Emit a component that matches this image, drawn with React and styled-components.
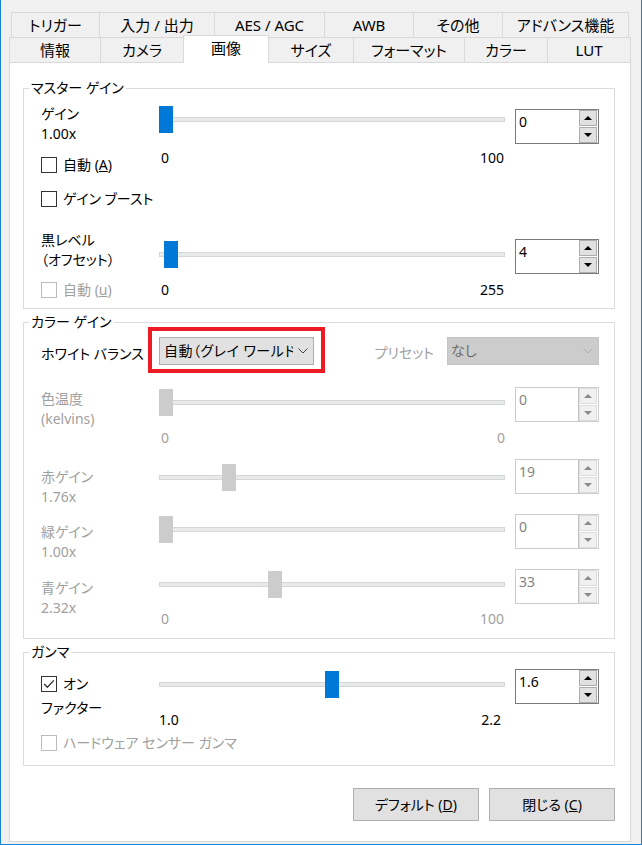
import React from 'react';
import styled, { createGlobalStyle } from 'styled-components';

const GRAY = '#a0a0a0';

const GlobalStyle = createGlobalStyle`
  html, body { margin: 0; padding: 0; background: #f0f0f0; }
  body {
    font-family: "Noto Sans", "Noto Sans CJK JP", sans-serif;
    font-size: 14px;
    color: #000;
    font-feature-settings: "palt" 1;
  }
`;

const Window = styled.div`
  width: 642px;
  height: 845px;
  box-sizing: border-box;
  border: 1px solid #1883d7;
  border-top: none;
  padding: 12px 10px 2px 8px;
  background: #f0f0f0;
`;

const TabRow = styled.div`
  display: flex;
  align-items: flex-end;
  height: 25px;
  margin-left: ${(p) => p.$indent || 0}px;
  position: relative;
`;

const Tab = styled.div`
  box-sizing: border-box;
  flex: none;
  width: ${(p) => p.$w}px;
  height: ${(p) => (p.$active ? 28 : 25)}px;
  margin-right: -1px;
  margin-bottom: ${(p) => (p.$active ? -1 : 0)}px;
  border: 1px solid #d9d9d9;
  border-bottom: none;
  background: ${(p) => (p.$active ? '#ffffff' : '#f0f0f0')};
  position: relative;
  z-index: ${(p) => (p.$active ? 2 : 1)};
  text-align: center;
  font-size: 15px;
  line-height: 24px;
  white-space: nowrap;
`;

const Panel = styled.div`
  box-sizing: border-box;
  width: 622px;
  height: 780px;
  background: #ffffff;
  border: 1px solid #d9d9d9;
  padding: 15px 15px 0 13px;
`;

const Group = styled.fieldset`
  margin: ${(p) => p.$mt || 0}px 0 0;
  padding: 0;
  border: 1px solid #dcdcdc;
  min-width: 0;
`;

const Legend = styled.legend`
  margin-left: 5px;
  padding: 0 2px;
  line-height: 20px;
  font-size: 14px;
  color: #000;
`;

const GroupBody = styled.div`
  padding: 0 0 ${(p) => p.$pb}px 17px;
`;

const SliderRow = styled.div`
  display: grid;
  grid-template-columns: 118px 356px 84px;
  align-items: start;
  margin-top: ${(p) => p.$mt || 0}px;
`;

const ComboRow = styled.div`
  display: grid;
  grid-template-columns: 118px 155px 1fr 152px;
  align-items: start;
  margin-top: ${(p) => p.$mt || 0}px;
  width: 558px;
`;

const Col = styled.div`
  display: flex;
  flex-direction: column;
  align-items: flex-start;
  padding-top: ${(p) => p.$pt || 0}px;
`;

const Text = styled.div`
  line-height: 20px;
  white-space: nowrap;
  color: ${(p) => (p.$dim ? GRAY : '#000')};
  margin-top: ${(p) => p.$mt || 0}px;
  padding-top: ${(p) => p.$pt || 0}px;
  padding-right: ${(p) => p.$pr || 0}px;
  justify-self: ${(p) => (p.$end ? 'end' : 'start')};
`;

const CheckLabel = styled.label`
  display: flex;
  align-items: center;
  gap: 6px;
  height: 20px;
  line-height: 20px;
  white-space: nowrap;
  margin-top: ${(p) => p.$mt || 0}px;
  color: ${(p) => (p.$dim ? GRAY : '#000')};
`;

const Box = styled.span`
  flex: none;
  width: 16px;
  height: 16px;
  box-sizing: border-box;
  border: 1px solid ${(p) => (p.$dim ? '#bcbcbc' : '#333333')};
  background: #fff;
  display: flex;
  align-items: center;
  justify-content: center;
`;

const SliderBox = styled.div`
  position: relative;
  width: 346px;
  height: 27px;
  padding-top: 11px;
  box-sizing: border-box;
`;

const Track = styled.div`
  height: 5px;
  box-sizing: border-box;
  border: 1px solid #d6d6d6;
  background: #e7eaea;
`;

const Thumb = styled.div`
  position: absolute;
  top: 0;
  width: 14px;
  height: 27px;
  background: ${(p) => (p.$dim ? '#cccccc' : '#0078d7')};
`;

const Ticks = styled.div`
  display: flex;
  justify-content: space-between;
  box-sizing: border-box;
  width: 346px;
  line-height: 20px;
  margin-top: ${(p) => p.$mt || 0}px;
  padding: 0 ${(p) => p.$r || 0}px 0 ${(p) => p.$l || 0}px;
  color: ${(p) => (p.$dim ? GRAY : '#000')};
`;

const Spin = styled.div`
  width: 84px;
  height: 35px;
  box-sizing: border-box;
  border: 1px solid ${(p) => (p.$dim ? '#cccccc' : '#7a7a7a')};
  background: #fff;
  display: flex;
  margin-top: ${(p) => p.$mt || 0}px;
`;

const SpinValue = styled.div`
  flex: 1;
  padding: 2px 0 0 3px;
  line-height: 20px;
  color: ${(p) => (p.$dim ? '#838383' : '#000')};
`;

const SpinButtons = styled.div`
  width: 20px;
  display: flex;
  flex-direction: column;
  gap: 1px;
  padding-right: 1px;
  border-left: 1px solid ${(p) => (p.$dim ? '#c4c4c4' : 'transparent')};
  box-sizing: border-box;
`;

const SpinBtn = styled.div`
  flex: 1;
  box-sizing: border-box;
  border: 1px solid ${(p) => (p.$dim ? '#dcdcdc' : '#adadad')};
  background: ${(p) => (p.$dim ? '#f0f0f0' : '#e1e1e1')};
  display: flex;
  align-items: center;
  justify-content: center;
`;

const Arrow = styled.span`
  width: 0;
  height: 0;
  border-left: 4px solid transparent;
  border-right: 4px solid transparent;
  ${(p) => (p.$down ? 'border-top' : 'border-bottom')}: 4px solid ${(p) => (p.$dim ? '#8a8a8a' : '#000')};
`;

const ComboWrap = styled.div`
  position: relative;
  ${(p) =>
    p.$mark &&
    `&::after {
      content: '';
      position: absolute;
      top: -10px;
      left: -11px;
      right: -11px;
      bottom: -8px;
      border: 4px solid #ed1c24;
      pointer-events: none;
    }`}
`;

const Combo = styled.div`
  box-sizing: border-box;
  width: ${(p) => p.$w}px;
  height: 28px;
  display: flex;
  background: ${(p) => (p.$dim ? '#cccccc' : '#e1e1e1')};
  border: 1px solid ${(p) => (p.$dim ? '#c4c4c4' : '#adadad')};
  color: ${(p) => (p.$dim ? '#6d6d6d' : '#000')};
`;

const ComboText = styled.div`
  flex: 1;
  min-width: 0;
  overflow: hidden;
  white-space: nowrap;
  padding: 3px 0 0 ${(p) => p.$pl || 4}px;
  line-height: 20px;
  letter-spacing: ${(p) => p.$ls || 0}px;
`;

const ComboArrow = styled.div`
  flex: none;
  width: 20px;
  display: flex;
  align-items: center;
  justify-content: center;
`;

const ButtonBar = styled.div`
  display: flex;
  justify-content: flex-end;
  gap: 10px;
  margin-top: 22px;
`;

const Button = styled.button`
  width: 126px;
  height: 33px;
  box-sizing: border-box;
  background: #e1e1e1;
  border: 1px solid #adadad;
  font: inherit;
  font-feature-settings: "palt" 1;
  color: #000;
  padding: 0;
  line-height: 20px;
`;

const Chevron = ({ color }) => (
  <svg width="10" height="6" viewBox="0 0 10 6">
    <polyline points="0.5,0.5 5,5 9.5,0.5" fill="none" stroke={color} strokeWidth="1" />
  </svg>
);

const Check = ({ checked, dim, children, mt }) => (
  <CheckLabel $dim={dim} $mt={mt}>
    <Box $dim={dim}>
      {checked && (
        <svg width="14" height="14" viewBox="0 0 14 14">
          <polyline points="2.2,7 5.4,10.2 11.8,3.4" fill="none" stroke="#333" strokeWidth="1.3" />
        </svg>
      )}
    </Box>
    <span>{children}</span>
  </CheckLabel>
);

const Slider = ({ value, min, max, dim }) => {
  const left = Math.floor(((value - min) / (max - min)) * 332);
  return (
    <SliderBox>
      <Track />
      <Thumb $dim={dim} style={{ left }} />
    </SliderBox>
  );
};

const SpinBox = ({ value, dim, mt }) => (
  <Spin $dim={dim} $mt={mt}>
    <SpinValue $dim={dim}>{value}</SpinValue>
    <SpinButtons $dim={dim}>
      <SpinBtn $dim={dim}>
        <Arrow $dim={dim} />
      </SpinBtn>
      <SpinBtn $dim={dim}>
        <Arrow $dim={dim} $down />
      </SpinBtn>
    </SpinButtons>
  </Spin>
);

const topTabs = [
  ['トリガー', 89],
  ['入力 / 出力', 116],
  ['AES / AGC', 111],
  ['AWB', 90],
  ['その他', 90],
  ['アドバンス機能', 127],
];
const bottomTabs = [
  ['情報', 92],
  ['カメラ', 84],
  ['画像', 86, true],
  ['サイズ', 86],
  ['フォーマット', 112],
  ['カラー', 84],
  ['LUT', 84],
];

export default function App() {
  return (
    <>
      <GlobalStyle />
      <Window>
        <TabRow $indent={2}>
          {topTabs.map(([t, w]) => (
            <Tab key={t} $w={w}>
              {t}
            </Tab>
          ))}
        </TabRow>
        <TabRow>
          {bottomTabs.map(([t, w, a]) => (
            <Tab key={t} $w={w} $active={a}>
              {t}
            </Tab>
          ))}
        </TabRow>
        <Panel>
          <Group>
            <Legend>マスター ゲイン</Legend>
            <GroupBody $pb={8}>
              <SliderRow $mt={6}>
                <Col>
                  <Text>ゲイン</Text>
                  <Text>1.00x</Text>
                  <Check mt={11}>
                    自動 (<u>A</u>)
                  </Check>
                </Col>
                <Col $pt={2}>
                  <Slider value={0} min={0} max={100} />
                  <Ticks $mt={15} $l={2} $r={1}>
                    <span>0</span>
                    <span>100</span>
                  </Ticks>
                </Col>
                <SpinBox value="0" mt={5} />
              </SliderRow>
              <SliderRow $mt={14}>
                <Check>ゲイン ブースト</Check>
              </SliderRow>
              <SliderRow $mt={21}>
                <Col>
                  <Text>黒レベル</Text>
                  <Text>（オフセット）</Text>
                  <Check dim mt={10}>
                    自動 (<u>u</u>)
                  </Check>
                </Col>
                <Col $pt={11}>
                  <Slider value={4} min={0} max={255} />
                  <Ticks $mt={12} $l={2} $r={1}>
                    <span>0</span>
                    <span>255</span>
                  </Ticks>
                </Col>
                <SpinBox value="4" mt={9} />
              </SliderRow>
            </GroupBody>
          </Group>

          <Group $mt={3}>
            <Legend>カラー ゲイン</Legend>
            <GroupBody $pb={9}>
              <ComboRow $mt={5}>
                <Text $pt={7}>ホワイト バランス</Text>
                <ComboWrap $mark>
                  <Combo $w={155}>
                    <ComboText $ls={0.5}>自動（グレイ ワールド）</ComboText>
                    <ComboArrow>
                      <Chevron color="#444" />
                    </ComboArrow>
                  </Combo>
                </ComboWrap>
                <Text $dim $pt={6} $pr={13} $end>
                  プリセット
                </Text>
                <Combo $w={152} $dim>
                  <ComboText $pl={3}>なし</ComboText>
                  <ComboArrow>
                    <Chevron color="#b0b0b0" />
                  </ComboArrow>
                </Combo>
              </ComboRow>

              <SliderRow $mt={22}>
                <Col $pt={2}>
                  <Text $dim>色温度</Text>
                  <Text $dim>(kelvins)</Text>
                </Col>
                <Col $pt={2}>
                  <Slider value={0} min={0} max={100} dim />
                  <Ticks $dim $mt={12} $l={2} $r={0}>
                    <span>0</span>
                    <span>0</span>
                  </Ticks>
                </Col>
                <SpinBox value="0" dim />
              </SliderRow>

              <SliderRow $mt={11}>
                <Col $pt={8}>
                  <Text $dim>赤ゲイン</Text>
                  <Text $dim>1.76x</Text>
                </Col>
                <Col $pt={5}>
                  <Slider value={19} min={0} max={100} dim />
                </Col>
                <SpinBox value="19" dim />
              </SliderRow>

              <SliderRow $mt={7}>
                <Col $pt={8}>
                  <Text $dim>緑ゲイン</Text>
                  <Text $dim>1.00x</Text>
                </Col>
                <Col $pt={2}>
                  <Slider value={0} min={0} max={100} dim />
                </Col>
                <SpinBox value="0" dim />
              </SliderRow>

              <SliderRow $mt={7}>
                <Col $pt={9}>
                  <Text $dim>青ゲイン</Text>
                  <Text $dim>2.32x</Text>
                </Col>
                <Col $pt={2}>
                  <Slider value={33} min={0} max={100} dim />
                  <Ticks $dim $mt={11} $l={2} $r={1}>
                    <span>0</span>
                    <span>100</span>
                  </Ticks>
                </Col>
                <SpinBox value="33" dim />
              </SliderRow>
            </GroupBody>
          </Group>

          <Group $mt={3}>
            <Legend>ガンマ</Legend>
            <GroupBody $pb={12}>
              <SliderRow $mt={7}>
                <Col $pt={5}>
                  <Check checked>オン</Check>
                  <Text $mt={4}>ファクター</Text>
                </Col>
                <Col $pt={2}>
                  <Slider value={1.6} min={1.0} max={2.2} />
                  <Ticks $mt={12} $l={0} $r={4}>
                    <span>1.0</span>
                    <span>2.2</span>
                  </Ticks>
                </Col>
                <SpinBox value="1.6" />
              </SliderRow>
              <SliderRow $mt={3}>
                <Check dim>ハードウェア センサー ガンマ</Check>
              </SliderRow>
            </GroupBody>
          </Group>

          <ButtonBar>
            <Button>
              デフォルト (<u>D</u>)
            </Button>
            <Button>
              閉じる (<u>C</u>)
            </Button>
          </ButtonBar>
        </Panel>
      </Window>
    </>
  );
}
